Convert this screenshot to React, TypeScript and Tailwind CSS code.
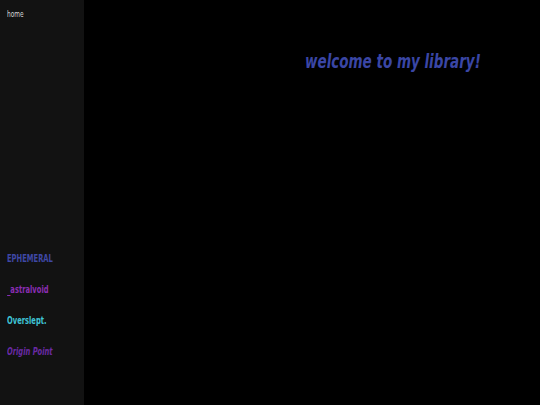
export default function App() {
  const font = { fontFamily: '"DejaVu Sans Condensed", "DejaVu Sans", sans-serif' };
  return (
    <div className="flex w-[540px] h-[405px] bg-black" style={font}>
      <aside className="flex w-[84px] flex-col bg-[#121212] px-[7px]">
        <div className="pt-[9px] text-[9px] leading-[11px] text-[#d8d8d8]">
          <span className="inline-block origin-left scale-x-[0.72] whitespace-nowrap">home</span>
        </div>
        <nav className="mt-[233px] flex flex-col gap-[20px] text-[10px] font-bold leading-[11px] whitespace-nowrap">
          <div className="text-[#3f48a6]">
            <span className="inline-block origin-left scale-x-[0.75]">EPHEMERAL</span>
          </div>
          <div className="text-[#8a2db3]">
            <span className="inline-block origin-left scale-x-[0.75]">_astralvoid</span>
          </div>
          <div className="text-[#3fc3d6]">
            <span className="inline-block origin-left scale-x-[0.75]">Overslept.</span>
          </div>
          <div className="italic text-[#6a2aa5]">
            <span className="inline-block origin-left scale-x-[0.75]">Origin Point</span>
          </div>
        </nav>
      </aside>
      <main className="flex-1 pl-[221px] pt-[49px]">
        <h1 className="text-[19px] font-bold italic leading-[24px] text-[#3a46a5] whitespace-nowrap">
          <span className="inline-block origin-left scale-x-[0.79]">welcome to my library!</span>
        </h1>
      </main>
    </div>
  );
}
